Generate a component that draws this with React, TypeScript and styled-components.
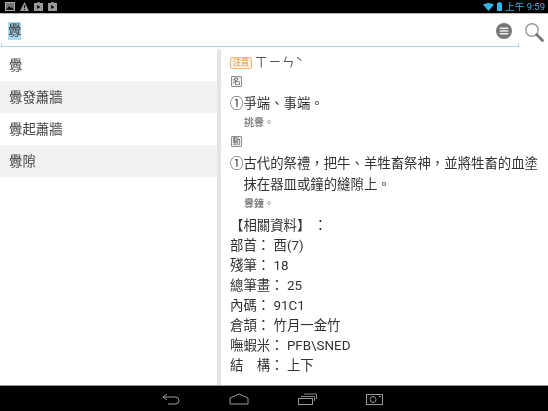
import React from "react";
import styled, { createGlobalStyle } from "styled-components";

const GlobalStyle = createGlobalStyle`
  html, body {
    margin: 0;
    padding: 0;
    background: #fff;
  }
  body {
    font-family: Roboto, "Noto Sans CJK TC", sans-serif;
  }
`;

const Screen = styled.div`
  width: 548px;
  height: 411px;
  display: flex;
  flex-direction: column;
  overflow: hidden;
  background: #fff;
  filter: blur(0.35px);
`;

const StatusBar = styled.div`
  height: 13px;
  background: #000;
  display: flex;
  justify-content: space-between;
  align-items: center;
  padding: 0 3px 0 5px;
  flex: none;
`;

const StatusIcons = styled.div`
  display: flex;
  align-items: center;
  gap: 5px;
`;

const StatusRight = styled.div`
  display: flex;
  align-items: center;
  gap: 3px;
  color: #33b5e5;
  font-size: 9.5px;
  line-height: 13px;
`;

const SearchBar = styled.div`
  height: 36px;
  flex: none;
  display: flex;
  align-items: flex-start;
  border-top: 1px solid #b8b8b8;
  box-sizing: border-box;
  background: #fff;
`;

const SearchField = styled.div`
  width: 518px;
  height: 33px;
  margin-left: 1px;
  box-sizing: border-box;
  border-bottom: 1px solid #9fd6ee;
  display: flex;
  align-items: center;
  justify-content: space-between;
  padding: 1px 7px 0 7px;
  position: relative;

  &::before,
  &::after {
    content: "";
    position: absolute;
    bottom: 0;
    width: 1px;
    height: 3px;
    background: #9fd6ee;
  }
  &::before {
    left: 0;
  }
  &::after {
    right: 0;
  }
`;

const SearchTerm = styled.span`
  font-size: 13.4px;
  line-height: 18px;
  color: #333;
  background: #a8dcf2;
`;

const SearchButton = styled.div`
  width: 29px;
  display: flex;
  justify-content: center;
  padding-top: 8px;
`;

const Body = styled.div`
  flex: 1;
  min-height: 0;
  display: flex;
`;

const WordList = styled.div`
  width: 217px;
  flex: none;
`;

const WordRow = styled.div<{ $shaded?: boolean }>`
  height: 32px;
  box-sizing: border-box;
  padding: 1px 0 0 9px;
  font-size: 13.4px;
  line-height: 31px;
  color: #444;
  background: ${(p) => (p.$shaded ? "#f2f2f2" : "#fff")};
`;

const Divider = styled.div`
  width: 4px;
  flex: none;
  background: #e4e4e4;
`;

const Detail = styled.div`
  flex: 1;
  padding: 5px 0 0 9px;
  color: #333;
  font-size: 13.4px;
`;

const PhoneticRow = styled.div`
  display: flex;
  align-items: center;
  gap: 3px;
  height: 17px;
  color: #555;
`;

const PhoneticTag = styled.span`
  width: 22px;
  height: 12px;
  box-sizing: border-box;
  border: 1px solid #f5b778;
  border-radius: 2px;
  background: #fdeedd;
  color: #f08a2c;
  font-size: 8px;
  line-height: 10px;
  text-align: center;
`;

const PhoneticText = styled.span`
  font-size: 12.5px;
  line-height: 14px;
  letter-spacing: 1px;
`;

const PosTag = styled.div`
  width: 11px;
  height: 11px;
  box-sizing: border-box;
  border: 1px solid #8e8e8e;
  border-radius: 1px;
  background: #f0f0f0;
  color: #555;
  font-size: 8px;
  line-height: 9px;
  text-align: center;
  margin: 5px 0 6px 1px;
`;

const Sense = styled.div`
  display: flex;
  line-height: 21px;
  width: 310px;
`;

const SenseNumber = styled.span`
  flex: none;
  width: 13.4px;
`;

const Example = styled.div<{ $gap: number }>`
  font-size: 10px;
  line-height: 14px;
  color: #555;
  margin: 2px 0 ${(p) => p.$gap}px 14px;
`;

const SectionTitle = styled.div`
  line-height: 20px;
  margin-top: 5px;
  white-space: pre;
`;

const InfoRow = styled.div`
  line-height: 20px;
  white-space: pre;
`;

const NavBar = styled.div`
  height: 26px;
  flex: none;
  background: #000;
  border-top: 1px solid #999;
  box-sizing: border-box;
  display: flex;
  align-items: center;
  padding-left: 162px;
  gap: 49px;
`;

const words = ["釁", "釁發蕭牆", "釁起蕭牆", "釁隙"];

const info = [
  "部首： 酉(7)",
  "殘筆： 18",
  "總筆畫： 25",
  "內碼： 91C1",
  "倉頡： 竹月一金竹",
  "嘸蝦米： PFB\\SNED",
  "結　構： 上下",
];

const App: React.FC = () => {
  return (
    <Screen>
      <GlobalStyle />
      <StatusBar>
        <StatusIcons>
          <svg width="10" height="9" viewBox="0 0 10 9">
            <rect x="0.5" y="0.5" width="9" height="8" fill="#777" stroke="#aaa" />
            <path d="M1 8 L4 4 L6 6 L7 5 L9 8Z" fill="#111" />
          </svg>
          <svg width="9" height="9" viewBox="0 0 9 9">
            <path d="M4.5 0 L9 9 H0Z" fill="#999" />
            <rect x="4" y="3" width="1" height="3" fill="#111" />
            <rect x="4" y="7" width="1" height="1" fill="#111" />
          </svg>
          <svg width="9" height="9" viewBox="0 0 9 9">
            <path d="M0 1 H3 L3.5 0 H5.5 L6 1 H9 V9 H0Z" fill="#999" />
            <path d="M3 3 L6.5 5 L3 7Z" fill="#111" />
          </svg>
          <svg width="9" height="9" viewBox="0 0 9 9">
            <path d="M0 1 H3 L3.5 0 H5.5 L6 1 H9 V9 H0Z" fill="#999" />
            <path d="M3 3 L6.5 5 L3 7Z" fill="#111" />
          </svg>
        </StatusIcons>
        <StatusRight>
          <svg width="11" height="8" viewBox="0 0 11 8">
            <path d="M0 1.5 Q5.5 -1.5 11 1.5 L5.5 8Z" fill="#33b5e5" />
          </svg>
          <svg width="5" height="9" viewBox="0 0 5 9">
            <rect x="1.5" y="0" width="2" height="1" fill="#33b5e5" />
            <rect x="0" y="1" width="5" height="8" fill="#33b5e5" />
          </svg>
          <span>上午 9:59</span>
        </StatusRight>
      </StatusBar>
      <SearchBar>
        <SearchField>
          <SearchTerm>釁</SearchTerm>
          <svg width="16" height="16" viewBox="0 0 16 16">
            <circle cx="8" cy="8" r="8" fill="#777" />
            <rect x="3.5" y="4.5" width="9" height="1.6" rx="0.8" fill="#eee" />
            <rect x="3.5" y="7.2" width="9" height="1.6" rx="0.8" fill="#eee" />
            <rect x="3.5" y="9.9" width="9" height="1.6" rx="0.8" fill="#eee" />
          </svg>
        </SearchField>
        <SearchButton>
          <svg width="20" height="20" viewBox="0 0 20 20">
            <circle cx="8" cy="8" r="6.2" fill="none" stroke="#999" strokeWidth="1.4" />
            <path d="M12.6 12.6 L18.5 18.5" stroke="#777" strokeWidth="2.8" strokeLinecap="round" />
          </svg>
        </SearchButton>
      </SearchBar>
      <Body>
        <WordList>
          {words.map((w, i) => (
            <WordRow key={w} $shaded={i % 2 === 1}>
              {w}
            </WordRow>
          ))}
        </WordList>
        <Divider />
        <Detail>
          <PhoneticRow>
            <PhoneticTag>注音</PhoneticTag>
            <PhoneticText>ㄒㄧㄣˋ</PhoneticText>
          </PhoneticRow>
          <PosTag>名</PosTag>
          <Sense>
            <SenseNumber>①</SenseNumber>
            <span>爭端、事端。</span>
          </Sense>
          <Example $gap={6}>挑釁。</Example>
          <PosTag>動</PosTag>
          <Sense>
            <SenseNumber>①</SenseNumber>
            <span>古代的祭禮，把牛、羊牲畜祭神，並將牲畜的血塗抹在器皿或鐘的縫隙上。</span>
          </Sense>
          <Example $gap={0}>釁鐘。</Example>
          <SectionTitle>【相關資料】 ：</SectionTitle>
          {info.map((line) => (
            <InfoRow key={line}>{line}</InfoRow>
          ))}
        </Detail>
      </Body>
      <NavBar>
        <svg width="18" height="12" viewBox="0 0 18 12">
          <path d="M5 1 L1 4 L5 7 M1 4 H13 Q17 4 17 7.5 Q17 11 13 11 H6" fill="none" stroke="#999" strokeWidth="1" />
        </svg>
        <svg width="20" height="12" viewBox="0 0 20 12">
          <path d="M1 5 L10 1 L19 5 V11 H1Z" fill="none" stroke="#999" strokeWidth="1" />
        </svg>
        <svg width="19" height="12" viewBox="0 0 19 12">
          <rect x="0.5" y="5.5" width="14" height="6" fill="none" stroke="#999" />
          <path d="M3 3.5 H16.5 V8 M6 1 H18.5 V6" fill="none" stroke="#888" />
        </svg>
        <svg width="17" height="12" viewBox="0 0 17 12">
          <rect x="0.5" y="1.5" width="16" height="10" fill="none" stroke="#999" />
          <circle cx="7" cy="6.5" r="3" fill="none" stroke="#999" />
          <rect x="13" y="3" width="2" height="1" fill="#999" />
        </svg>
      </NavBar>
    </Screen>
  );
};

export default App;
